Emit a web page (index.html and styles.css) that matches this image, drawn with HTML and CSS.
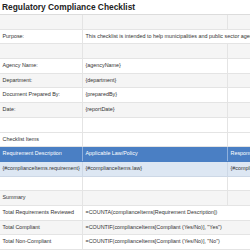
FILE: index.html
```html
<!DOCTYPE html>
<html>
<head>
<meta charset="utf-8">
<link rel="stylesheet" href="styles.css">
</head>
<body>
<div class="sheet">
  <div class="title">Regulatory Compliance Checklist</div>
  <div class="row alt"><div class="c"></div><div class="c"></div><div class="c"></div></div>
  <div class="row"><div class="c">Purpose:</div><div class="c span">This checklist is intended to help municipalities and public sector agencies review compliance with applicable laws and policies.</div></div>
  <div class="row alt"><div class="c"></div><div class="c"></div><div class="c"></div></div>
  <div class="row"><div class="c">Agency Name:</div><div class="c">{agencyName}</div><div class="c"></div></div>
  <div class="row alt"><div class="c">Department:</div><div class="c">{department}</div><div class="c"></div></div>
  <div class="row"><div class="c">Document Prepared By:</div><div class="c">{preparedBy}</div><div class="c"></div></div>
  <div class="row alt"><div class="c">Date:</div><div class="c">{reportDate}</div><div class="c"></div></div>
  <div class="row"><div class="c"></div><div class="c"></div><div class="c"></div></div>
  <div class="row"><div class="c">Checklist Items</div><div class="c"></div><div class="c"></div></div>
  <div class="row head"><div class="c">Requirement Description</div><div class="c">Applicable Law/Policy</div><div class="c">Responsible Party</div></div>
  <div class="row data"><div class="c">{#complianceItems.requirement}</div><div class="c">{#complianceItems.law}</div><div class="c">{#complianceItems.responsible}</div></div>
  <div class="row"><div class="c"></div><div class="c"></div><div class="c"></div></div>
  <div class="row alt"><div class="c">Summary</div><div class="c"></div><div class="c"></div></div>
  <div class="row"><div class="c">Total Requirements Reviewed</div><div class="c span">=COUNTA(complianceItems[Requirement Description])</div></div>
  <div class="row alt"><div class="c">Total Compliant</div><div class="c span">=COUNTIF(complianceItems[Compliant (Yes/No)], "Yes")</div></div>
  <div class="row"><div class="c">Total Non-Compliant</div><div class="c span">=COUNTIF(complianceItems[Compliant (Yes/No)], "No")</div></div>
</div>
</body>
</html>
```
FILE: styles.css
```css
html, body {
  margin: 0;
  padding: 0;
  background: #ffffff;
  overflow: hidden;
}
.sheet {
  width: 330px;
  font-family: "Liberation Sans", Arial, sans-serif;
  font-size: 5.4px;
  color: #333333;
}
.title {
  height: 15px;
  box-sizing: border-box;
  padding-left: 2px;
  font-size: 8.4px;
  font-weight: bold;
  line-height: 14px;
  color: #222222;
  border-bottom: 1px solid #dcdcdc;
}
.row {
  display: grid;
  grid-template-columns: 83px 145px 102px;
  height: 14.7px;
  box-sizing: border-box;
  border-bottom: 1px solid #e4e4e4;
  background: #ffffff;
}
.row.alt {
  background: #f5f5f5;
}
.c {
  border-right: 1px solid #e4e4e4;
  padding-left: 2.5px;
  line-height: 13.7px;
  white-space: nowrap;
  overflow: hidden;
}
.c.span {
  grid-column: span 2;
}
.row.head {
  background: #4a7fc4;
  color: #ffffff;
  border-bottom-color: #4a7fc4;
}
.row.head .c {
  border-right-color: #8fb0dc;
}
.row.data {
  background: #dde7f3;
  border-bottom-color: #cdd8e6;
}
.row.data .c {
  border-right-color: #cdd8e6;
}
```
